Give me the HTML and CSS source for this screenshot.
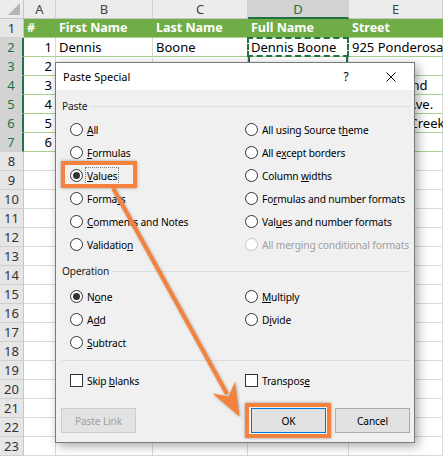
FILE: index.html
```html
<!DOCTYPE html>
<html>
<head>
<meta charset="utf-8">
<title>Paste Special</title>
<link rel="stylesheet" href="styles.css">
</head>
<body>
<div class="sheet">
  <div class="row hdr">
    <div class="c rh corner"><span class="tri"></span></div>
    <div class="c ch">A</div><div class="c ch">B</div><div class="c ch">C</div><div class="c ch chsel">D</div><div class="c ch">E</div>
  </div>
  <div class="row th">
    <div class="c rh">1</div>
    <div class="c g">#</div><div class="c g">First Name</div><div class="c g">Last Name</div><div class="c g">Full Name</div><div class="c g">Street</div>
  </div>
  <div class="row tb">
    <div class="c rh rhsel">2</div>
    <div class="c num">1</div><div class="c">Dennis</div><div class="c">Boone</div><div class="c ants">Dennis Boone</div><div class="c ov">925 Ponderosa</div>
  </div>
  <div class="row tb">
    <div class="c rh rhsel">3</div>
    <div class="c num">2</div><div class="c"></div><div class="c"></div><div class="c dsel"></div><div class="c"></div>
  </div>
  <div class="row tb">
    <div class="c rh rhsel">4</div>
    <div class="c num">3</div><div class="c"></div><div class="c"></div><div class="c dsel"></div><div class="c ov">416 Midland</div>
  </div>
  <div class="row tb">
    <div class="c rh rhsel">5</div>
    <div class="c num">4</div><div class="c"></div><div class="c"></div><div class="c dsel"></div><div class="c ov">8 Mason Ave.</div>
  </div>
  <div class="row tb">
    <div class="c rh rhsel">6</div>
    <div class="c num">5</div><div class="c"></div><div class="c"></div><div class="c dsel"></div><div class="c ov">141 Bear Creek</div>
  </div>
  <div class="row tb">
    <div class="c rh rhsel">7</div>
    <div class="c num">6</div><div class="c"></div><div class="c"></div><div class="c dsel"></div><div class="c">17 Oak Dr.</div>
  </div>
  <div class="row"><div class="c rh">8</div><div class="c"></div><div class="c"></div><div class="c"></div><div class="c"></div><div class="c"></div></div>
  <div class="row"><div class="c rh">9</div><div class="c"></div><div class="c"></div><div class="c"></div><div class="c"></div><div class="c"></div></div>
  <div class="row"><div class="c rh">10</div><div class="c"></div><div class="c"></div><div class="c"></div><div class="c"></div><div class="c"></div></div>
  <div class="row"><div class="c rh">11</div><div class="c"></div><div class="c"></div><div class="c"></div><div class="c"></div><div class="c"></div></div>
  <div class="row"><div class="c rh">12</div><div class="c"></div><div class="c"></div><div class="c"></div><div class="c"></div><div class="c"></div></div>
  <div class="row"><div class="c rh">13</div><div class="c"></div><div class="c"></div><div class="c"></div><div class="c"></div><div class="c"></div></div>
  <div class="row"><div class="c rh">14</div><div class="c"></div><div class="c"></div><div class="c"></div><div class="c"></div><div class="c"></div></div>
  <div class="row"><div class="c rh">15</div><div class="c"></div><div class="c"></div><div class="c"></div><div class="c"></div><div class="c"></div></div>
  <div class="row"><div class="c rh">16</div><div class="c"></div><div class="c"></div><div class="c"></div><div class="c"></div><div class="c"></div></div>
  <div class="row"><div class="c rh">17</div><div class="c"></div><div class="c"></div><div class="c"></div><div class="c"></div><div class="c"></div></div>
  <div class="row"><div class="c rh">18</div><div class="c"></div><div class="c"></div><div class="c"></div><div class="c"></div><div class="c"></div></div>
  <div class="row"><div class="c rh">19</div><div class="c"></div><div class="c"></div><div class="c"></div><div class="c"></div><div class="c"></div></div>
  <div class="row"><div class="c rh">20</div><div class="c"></div><div class="c"></div><div class="c"></div><div class="c"></div><div class="c"></div></div>
  <div class="row"><div class="c rh">21</div><div class="c"></div><div class="c"></div><div class="c"></div><div class="c"></div><div class="c"></div></div>
  <div class="row"><div class="c rh">22</div><div class="c"></div><div class="c"></div><div class="c"></div><div class="c"></div><div class="c"></div></div>
  <div class="row"><div class="c rh">23</div><div class="c"></div><div class="c"></div><div class="c"></div><div class="c"></div><div class="c"></div></div>
</div>

<div class="dlg">
  <div class="title">
    <span class="ttext">Paste Special</span>
    <span class="help">?</span>
    <svg class="close" width="10" height="10" viewBox="0 0 10 10"><path d="M0.5 0.5 L9.5 9.5 M9.5 0.5 L0.5 9.5" stroke="#000" stroke-width="1" fill="none"/></svg>
  </div>
  <div class="dbody">
    <div class="grp">Paste</div>
    <div class="opts six">
      <div class="opt"><span class="radio"></span><span><u>A</u>ll</span></div>
      <div class="opt"><span class="radio"></span><span>All using Source t<u>h</u>eme</span></div>
      <div class="opt"><span class="radio"></span><span><u>F</u>ormulas</span></div>
      <div class="opt"><span class="radio"></span><span>All e<u>x</u>cept borders</span></div>
      <div class="opt"><span class="radio on"></span><span class="focus"><u>V</u>alues</span></div>
      <div class="opt"><span class="radio"></span><span>Column <u>w</u>idths</span></div>
      <div class="opt"><span class="radio"></span><span>Forma<u>t</u>s</span></div>
      <div class="opt"><span class="radio"></span><span>Fo<u>r</u>mulas and number formats</span></div>
      <div class="opt"><span class="radio"></span><span><u>C</u>omments and Notes</span></div>
      <div class="opt"><span class="radio"></span><span>Val<u>u</u>es and number formats</span></div>
      <div class="opt"><span class="radio"></span><span>Validatio<u>n</u></span></div>
      <div class="opt dis"><span class="radio"></span><span>All merging conditional formats</span></div>
    </div>
    <div class="grp op">Operation</div>
    <div class="opts three">
      <div class="opt"><span class="radio on"></span><span>N<u>o</u>ne</span></div>
      <div class="opt"><span class="radio"></span><span><u>M</u>ultiply</span></div>
      <div class="opt"><span class="radio"></span><span>A<u>d</u>d</span></div>
      <div class="opt"><span class="radio"></span><span>D<u>i</u>vide</span></div>
      <div class="opt"><span class="radio"></span><span><u>S</u>ubtract</span></div>
      <div class="opt"></div>
    </div>
    <div class="sep"></div>
    <div class="opts one">
      <div class="opt"><span class="chk"></span><span>Skip <u>b</u>lanks</span></div>
      <div class="opt"><span class="chk"></span><span>Transpos<u>e</u></span></div>
    </div>
    <div class="btns">
      <span class="btn bdis">Paste Link</span>
      <span class="btn bdef">OK</span>
      <span class="btn">Cancel</span>
    </div>
  </div>
</div>

<div class="hl hl-values"></div>
<div class="hl hl-ok"></div>

<svg class="arrow" width="443" height="457" viewBox="0 0 443 457">
  <line x1="113" y1="188" x2="227" y2="394" stroke="#f5823c" stroke-width="4"/>
  <polygon points="239.5,416.5 212.5,393.5 228.5,396.5 235,381.5" fill="#f5823c"/>
</svg>
</body>
</html>
```

FILE: styles.css
```css
* { box-sizing: border-box; }
html, body { margin: 0; padding: 0; }
body {
  width: 443px;
  height: 457px;
  overflow: hidden;
  position: relative;
  background: #fff;
  font-family: "Noto Sans", sans-serif;
}

/* spreadsheet */
.sheet { display: flex; flex-direction: column; }
.row {
  display: grid;
  grid-template-columns: 24px 32px 97px 95px 101px 94px;
  height: 19px;
}
.c {
  border-right: 1px solid #dadada;
  border-bottom: 1px solid #dadada;
  font-size: 13px;
  line-height: 18px;
  padding: 0 3px;
  white-space: nowrap;
  overflow: hidden;
  color: #000;
}
.ov { overflow: visible; }
.num { text-align: right; }

.rh {
  background: #e6e6e6;
  border-right: 1px solid #c6c6c6;
  border-bottom: 1px solid #d0d0d0;
  text-align: center;
  color: #333;
  padding: 0;
}
.rhsel {
  background: #d3d3d3;
  color: #217346;
  border-right: 2px solid #217346;
}
.corner {
  display: flex;
  justify-content: flex-end;
  align-items: flex-end;
  padding: 0 3px 3px 0;
  background: #ececec;
  border-bottom: 1px solid #c6c6c6;
}
.tri {
  width: 0;
  height: 0;
  border-left: 12px solid transparent;
  border-bottom: 12px solid #b4b4b4;
}
.ch {
  background: #ececec;
  border-right: 1px solid #d0d0d0;
  border-bottom: 1px solid #c6c6c6;
  text-align: center;
  color: #444;
}
.chsel {
  background: #d3d3d3;
  color: #217346;
  border-bottom: 2px solid #217346;
}
.g {
  background: #70ad47;
  color: #fff;
  font-weight: bold;
  font-size: 12.5px;
  border-right-color: #70ad47;
  border-bottom-color: #a9d08e;
}
.tb .c:not(.rh) { border-bottom-color: #a9d08e; }
.ants { position: relative; overflow: visible; }
.ants::after {
  content: "";
  position: absolute;
  top: -1px; left: -1px; right: -1px; bottom: -1px;
  border: 2px dashed #217346;
}
.dsel { box-shadow: inset 2px 0 #217346, inset -2px 0 #217346; }

/* dialog */
.dlg {
  position: absolute;
  left: 55px;
  top: 62px;
  width: 360px;
  height: 381px;
  border: 1px solid #7a7a7a;
  background: #f0f0f0;
  box-shadow: 3px 3px 10px rgba(0,0,0,0.35);
  font-family: "Noto Sans", sans-serif;
  font-size: 10.2px;
  letter-spacing: -0.15px;
  color: #000;
  display: flex;
  flex-direction: column;
}
.title {
  height: 27px;
  background: #fff;
  display: flex;
  align-items: center;
  padding-left: 7px;
  font-size: 11px;
  letter-spacing: 0;
}
.ttext { flex: 1; }
.help {
  width: 10px;
  text-align: center;
  font-size: 12px;
  margin-right: 35px;
}
.close { margin-right: 18px; }

.dbody {
  flex: 1;
  display: flex;
  flex-direction: column;
  padding: 0 4px 0 6px;
}
.grp {
  height: 16px;
  margin-top: 8px;
  display: flex;
  align-items: center;
  gap: 3px;
  color: #1a1a1a;
}
.grp::after {
  content: "";
  flex: 1;
  height: 1px;
  background: #dcdcdc;
}
.grp.op { margin-top: 7px; }
.opts {
  display: grid;
  grid-template-columns: 175px 1fr;
  grid-auto-rows: 23px;
  padding-left: 8px;
}
.six { margin-top: 4px; }
.three { margin-top: 6px; }
.one { margin-top: 8px; }
.opt {
  display: flex;
  align-items: center;
  gap: 4px;
  white-space: nowrap;
}
.opt u { text-decoration-thickness: 1px; text-underline-offset: 1px; }
.radio {
  width: 13px;
  height: 13px;
  border: 1px solid #333;
  border-radius: 50%;
  background: #fff;
  flex: none;
  display: flex;
  align-items: center;
  justify-content: center;
}
.radio.on::after {
  content: "";
  width: 7px;
  height: 7px;
  border-radius: 50%;
  background: #333;
}
.dis { color: #a0a0a0; }
.dis .radio { border-color: #c4c4c4; }
.focus { outline: 1px dotted #777; outline-offset: 1px; }
.chk {
  width: 13px;
  height: 13px;
  border: 1px solid #333;
  background: #fff;
  flex: none;
}
.sep {
  height: 1px;
  background: #dcdcdc;
  margin-top: 6px;
}
.btns {
  display: flex;
  gap: 9px;
  margin-top: 16px;
  height: 25px;
}
.btn {
  width: 75px;
  height: 25px;
  display: flex;
  align-items: center;
  justify-content: center;
  background: #e1e1e1;
  border: 1px solid #adadad;
}
.bdis {
  margin-left: -1px;
  margin-right: auto;
  color: #a0a0a0;
  background: #e3e3e3;
  border-color: #cdcdcd;
}
.bdef { border-color: #0078d7; }

/* annotations */
.hl {
  position: absolute;
  border: 4px solid #f5823c;
  box-shadow: 0 0 3px rgba(0,0,0,0.35);
}
.hl-values { left: 61px; top: 161px; width: 76px; height: 27px; }
.hl-ok { left: 245px; top: 403px; width: 86px; height: 35px; }
.arrow {
  position: absolute;
  left: 0;
  top: 0;
  pointer-events: none;
  filter: drop-shadow(1px 1px 1.5px rgba(0,0,0,0.3));
}
```
